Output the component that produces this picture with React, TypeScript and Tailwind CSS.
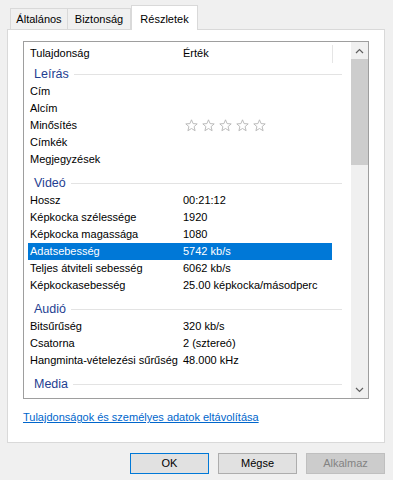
import React from "react";

const font = { fontFamily: '"Liberation Sans", Arial, sans-serif' };

function Star() {
  return (
    <svg width="13" height="13" viewBox="0 0 13 13" className="shrink-0">
      <path
        d="M6.5 0.8 L8.1 4.6 L12.2 4.9 L9.1 7.6 L10.1 11.7 L6.5 9.5 L2.9 11.7 L3.9 7.6 L0.8 4.9 L4.9 4.6 Z"
        fill="none"
        stroke="#b4b4b4"
        strokeWidth="0.9"
        strokeLinejoin="round"
      />
    </svg>
  );
}

function Group({ title, first }: { title: string; first?: boolean }) {
  return (
    <div className={`flex items-center h-[18px] ml-[10px] mr-[9px] ${first ? "" : "mt-[6px]"}`}>
      <span className="text-[#1e3e91] text-[12.5px] leading-none">{title}</span>
      <div className="flex-1 h-px bg-[#e3e3e3] ml-[5px]" />
    </div>
  );
}

function Row({ label, value, selected }: { label: string; value?: React.ReactNode; selected?: boolean }) {
  return (
    <div
      className={`flex items-center h-[17px] ml-[4px] w-[304px] text-[11px] leading-none ${
        selected ? "bg-[#0078d7] text-white" : "text-black"
      }`}
    >
      <div className="w-[155px] pl-[2px] whitespace-nowrap shrink-0">{label}</div>
      <div className="whitespace-nowrap">{value}</div>
    </div>
  );
}

export default function App() {
  return (
    <div className="w-[393px] h-[480px] bg-[#f0f0f0] overflow-hidden" style={font}>
      {/* tabs */}
      <div className="flex items-end h-[29px] pl-[10px] relative z-10">
        <div className="h-[21px] w-[58px] border border-[#d9d9d9] border-b-0 bg-[#f0f0f0] flex items-center justify-center text-[11px] text-black">
          Általános
        </div>
        <div className="h-[21px] w-[63px] border border-[#d9d9d9] border-b-0 border-l-0 bg-[#f0f0f0] flex items-center justify-center text-[11px] text-black">
          Biztonság
        </div>
        <div className="h-[25px] w-[67px] border border-[#d9d9d9] border-b-0 bg-white flex items-start pt-[5px] justify-center text-[11px] text-black -mb-px">
          Részletek
        </div>
      </div>

      {/* panel */}
      <div className="ml-[7px] w-[378px] h-[414px] border border-[#d9d9d9] bg-white pl-[15px] pt-[11px]">
        <div className="w-[346px] h-[358px] border border-[#9e9e9e] flex">
          <div className="flex-1 overflow-hidden">
            {/* header */}
            <div className="h-[23px] flex items-center text-[11px] text-black relative">
              <div className="w-[159px] pl-[6px]">Tulajdonság</div>
              <div className="flex-1">Érték</div>
              <div className="absolute left-[308px] top-[3px] h-[18px] w-px bg-[#e5e5e5]" />
            </div>

            <Group title="Leírás" first />
            <Row label="Cím" />
            <Row label="Alcím" />
            <Row
              label="Minősítés"
              value={
                <div className="flex gap-[4px] pl-[2px]">
                  <Star />
                  <Star />
                  <Star />
                  <Star />
                  <Star />
                </div>
              }
            />
            <Row label="Címkék" />
            <Row label="Megjegyzések" />

            <Group title="Videó" />
            <Row label="Hossz" value="00:21:12" />
            <Row label="Képkocka szélessége" value="1920" />
            <Row label="Képkocka magassága" value="1080" />
            <Row label="Adatsebesség" value="5742 kb/s" selected />
            <Row label="Teljes átviteli sebesség" value="6062 kb/s" />
            <Row label="Képkockasebesség" value="25.00 képkocka/másodperc" />

            <Group title="Audió" />
            <Row label="Bitsűrűség" value="320 kb/s" />
            <Row label="Csatorna" value="2 (sztereó)" />
            <Row label="Hangminta-vételezési sűrűség" value="48.000 kHz" />

            <Group title="Media" />
          </div>

          {/* scrollbar */}
          <div className="w-[17px] bg-[#f0f0f0] flex flex-col">
            <div className="h-[17px] flex items-center justify-center">
              <svg width="9" height="6" viewBox="0 0 9 6">
                <path d="M1 5 L4.5 1.5 L8 5" fill="none" stroke="#606060" strokeWidth="1.2" />
              </svg>
            </div>
            <div className="h-[106px] bg-[#cdcdcd]" />
            <div className="flex-1" />
            <div className="h-[17px] flex items-center justify-center">
              <svg width="9" height="6" viewBox="0 0 9 6">
                <path d="M1 1 L4.5 4.5 L8 1" fill="none" stroke="#606060" strokeWidth="1.2" />
              </svg>
            </div>
          </div>
        </div>

        <div className="mt-[10px] text-[11px] leading-[16px] text-[#0066cc] underline">
          Tulajdonságok és személyes adatok eltávolítása
        </div>
      </div>

      {/* buttons */}
      <div className="flex justify-end gap-[9px] pr-[8px] mt-[10px]">
        <div className="w-[79px] h-[21px] bg-[#e1e1e1] border border-[#0078d7] flex items-center justify-center text-[11px] text-black">
          OK
        </div>
        <div className="w-[79px] h-[21px] bg-[#e1e1e1] border border-[#adadad] flex items-center justify-center text-[11px] text-black">
          Mégse
        </div>
        <div className="w-[79px] h-[21px] bg-[#cccccc] border border-[#bfbfbf] flex items-center justify-center text-[11px] text-[#838383]">
          Alkalmaz
        </div>
      </div>
    </div>
  );
}
